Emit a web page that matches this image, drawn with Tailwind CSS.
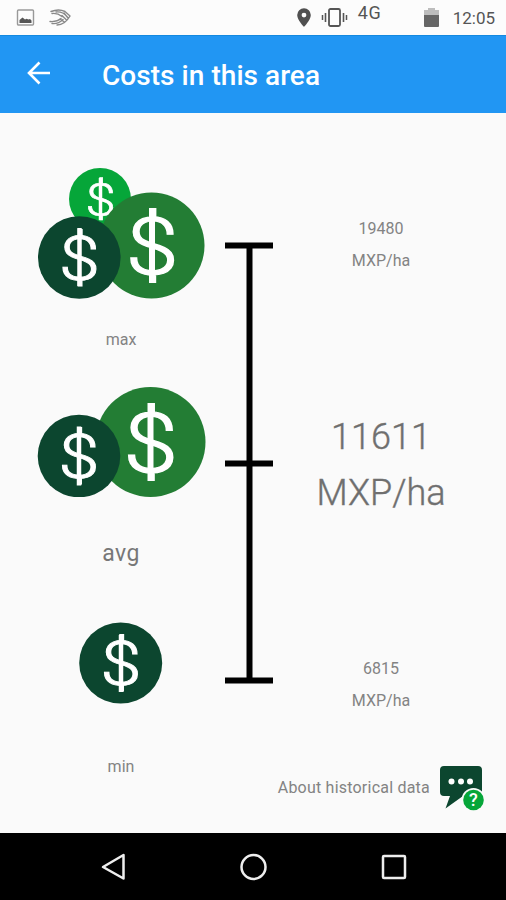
<!DOCTYPE html>
<html lang="en">
<head>
    <meta charset="UTF-8">
    <meta name="viewport" content="width=device-width, initial-scale=1.0">
    <title>Costs in this area</title>
    <script src="https://cdn.jsdelivr.net/npm/@tailwindcss/browser@4"></script>
</head>
<body class="bg-[#fafafa] font-['Roboto',sans-serif] text-[#838383]">

<div class="flex h-[900px] w-[506px] flex-col overflow-hidden">

    <!-- Status bar -->
    <div class="flex h-[35px] shrink-0 items-center bg-[#fcfcfc] pl-4 pr-[11px] text-[#555]">
        <svg class="h-[18px] w-[19px]" viewBox="0 0 19 18" fill="none">
            <rect x="1.5" y="1" width="16" height="15" rx="1" stroke="#999" stroke-width="1.4" />
            <path d="M3.500 14v-3l3-2.500 2.500 2 1.500-.7 2 .6 1.500-.3 1.500 1.400V14z" fill="#555" />
        </svg>
        <svg class="ml-[14px] h-[18px] w-[22px]" viewBox="0 0 22 18" fill="none" stroke="#888" stroke-width="1.400" stroke-linecap="round">
            <path d="M2 2.500C7 .5 12 .5 16 2.500l5 4.500M3 4.500c4-.5 7 .5 10 3M7 3c4-.5 8 1 11 4.500M1 12.500c5 .5 8-.5 11-3M3 14.500c5 .5 8-1 11-4M8 16c5 0 9-2 13-9M15 4l4 5M13 6.500l4.500 4.500M11 10l4.500 3" />
        </svg>
        <div class="ml-auto flex items-center">
            <svg class="h-5 w-4" viewBox="0 0 16 20">
                <path d="M8 .3a6.800 6.800 0 0 0-6.800 6.800C1.200 12 8 19 8 19s6.800-7 6.800-11.900A6.800 6.800 0 0 0 8 .3zm0 9.200a2.400 2.400 0 1 1 0-4.800 2.400 2.400 0 0 1 0 4.800z" fill="#505050" />
            </svg>
            <svg class="ml-[9px] h-5 w-7" viewBox="0 0 28 20" fill="none" stroke="#555">
                <rect x="8" y="1" width="11" height="17" rx="1.500" stroke-width="1.800" />
                <path d="M4.500 5v9M22.500 5v9" stroke-width="1.600" />
                <path d="M1.500 7v5M25.500 7v5" stroke-width="1.500" />
            </svg>
            <span class="mb-[9px] ml-[9px] text-[18px] leading-5 tracking-[0.8px]">4G</span>
            <svg class="ml-[42px] h-5 w-[15px]" viewBox="0 0 15 20">
                <path d="M4 0h7v2h4v5H0V2h4z" fill="#bdbdbd" />
                <path d="M0 7h15v11a1 1 0 0 1-1 1H1a1 1 0 0 1-1-1z" fill="#666" />
            </svg>
            <span class="ml-[14px] text-[17px] leading-5">12:05</span>
        </div>
    </div>

    <!-- App bar -->
    <div class="flex h-[78px] shrink-0 items-center border-t border-[#1389e0] bg-[#2196f3] pl-[26px] text-white">
        <svg class="mb-1 h-6 w-6" viewBox="0 0 24 24" fill="none" stroke="currentColor" stroke-width="2.600">
            <path d="M25 12H3M13.500 1.500 3 12l10.500 10.500" />
        </svg>
        <h1 class="ml-[52px] pt-[3px] text-[28px] font-medium leading-9 tracking-[0.05px]">Costs in this area</h1>
    </div>

    <!-- Cost levels -->
    <main class="grid h-[642px] shrink-0 grid-cols-[225px_48px_1fr]">
        <div class="flex flex-col items-center pl-[17px] pt-[55px]">
            <svg class="h-[132px] w-[170px]" viewBox="36 168 170 132" fill="#fff" stroke="#fff" text-anchor="middle">
                <circle cx="100" cy="199" r="31" fill="#06a639" stroke="none" />
                <text transform="translate(100.500 215.500) scale(1.200 1)" font-size="46" font-weight="300" stroke-width=".6">$</text>
                <path d="M100.500 178v42" stroke-width="3.500" />
                <circle cx="151.500" cy="245.500" r="53" fill="#237d34" stroke="none" />
                <text transform="translate(152 274) scale(1.200 1)" font-size="80" font-weight="300" stroke-width="1.200">$</text>
                <path d="M152 208v75" stroke-width="6" />
                <circle cx="79.300" cy="257.500" r="41.300" fill="#0c462f" stroke="none" />
                <text transform="translate(79.500 279.500) scale(1.200 1)" font-size="62" font-weight="300" stroke-width=".9">$</text>
                <path d="M79.500 228v58" stroke-width="4.500" />
            </svg>
            <p class="mt-[28px] text-base leading-6">max</p>
            <svg class="mt-[35px] h-[110px] w-[170px]" viewBox="36 387 170 110" fill="#fff" stroke="#fff" text-anchor="middle">
                <circle cx="150.500" cy="442" r="55" fill="#237d34" stroke="none" />
                <text transform="translate(150.500 471.500) scale(1.200 1)" font-size="83" font-weight="300" stroke-width="1.200">$</text>
                <path d="M150.500 403v78" stroke-width="6" />
                <circle cx="79" cy="456" r="41.300" fill="#0c462f" stroke="none" />
                <text transform="translate(79 478) scale(1.200 1)" font-size="62" font-weight="300" stroke-width=".9">$</text>
                <path d="M79 426.500v59" stroke-width="4.500" />
            </svg>
            <p class="mt-[41px] text-[23px] leading-8 tracking-[0.4px] text-[#777]">avg</p>
            <svg class="mt-[52px] h-[82px] w-[84px]" viewBox="79 622 84 82" fill="#fff" stroke="#fff" text-anchor="middle">
                <ellipse cx="120.700" cy="663" rx="41.500" ry="40.500" fill="#0c462f" stroke="none" />
                <text transform="translate(121 685) scale(1.200 1)" font-size="62" font-weight="300" stroke-width=".9">$</text>
                <path d="M121 635v57" stroke-width="4.500" />
            </svg>
            <p class="mt-[51px] text-base leading-6">min</p>
        </div>

        <!-- Range scale -->
        <svg class="mt-[129px] h-[442px] w-12" viewBox="0 0 48 442" fill="none" stroke="#000" stroke-width="6">
            <path d="M24.500 3v436M0 3.500h48.500M0 221.500h48.500M0 438.500h48.500" />
        </svg>

        <div class="flex flex-col items-center pr-[17px] pt-[100px]">
            <p class="text-center text-base leading-8">19480<br>MXP/ha</p>
            <p class="mt-[132px] text-center text-4xl font-light leading-14 text-[#6e6e6e] [-webkit-text-stroke:0.4px_#757575]">11611<br>MXP/ha</p>
            <p class="mt-[132px] text-center text-base leading-8">6815<br>MXP/ha</p>
        </div>
    </main>

    <!-- Help link -->
    <div class="flex h-[78px] shrink-0 items-start justify-end pr-[21px] pt-2">
        <a href="#" class="flex items-center">
            <span class="pt-0.5 text-base tracking-[0.22px]">About historical data</span>
            <svg class="ml-[9px] h-12 w-[46px]" viewBox="0 0 46 48">
                <path d="M5 3h34a4 4 0 0 1 4 4v22a4 4 0 0 1-4 4H24L6.500 45.500 11 33H5a4 4 0 0 1-4-4V7a4 4 0 0 1 4-4z" fill="#0c462f" />
                <g fill="#fff">
                    <circle cx="12.500" cy="18.500" r="3" />
                    <circle cx="22" cy="18.500" r="3" />
                    <circle cx="31" cy="18.500" r="3" />
                </g>
                <circle cx="34.500" cy="37" r="12" fill="#fafafa" />
                <circle cx="34.500" cy="37" r="10.300" fill="#06a639" />
                <text x="34.500" y="43.200" font-size="18" font-weight="500" fill="#fff" text-anchor="middle">?</text>
            </svg>
        </a>
    </div>

    <!-- Navigation bar -->
    <div class="flex h-[67px] items-center justify-between bg-black pl-[100px] pr-[98px]">
        <svg class="h-7 w-7" viewBox="0 0 28 28" fill="none" stroke="#eee" stroke-width="2.500" stroke-linejoin="round">
            <path d="M23.500 2v23.500L3 14z" />
        </svg>
        <svg class="h-7 w-7" viewBox="0 0 28 28" fill="none" stroke="#eee" stroke-width="2.500">
            <circle cx="13.500" cy="14" r="12" />
        </svg>
        <svg class="h-7 w-7" viewBox="0 0 28 28" fill="none" stroke="#eee" stroke-width="2.500">
            <rect x="3" y="3" width="22" height="22" rx="1" />
        </svg>
    </div>

</div>

</body>
</html>
